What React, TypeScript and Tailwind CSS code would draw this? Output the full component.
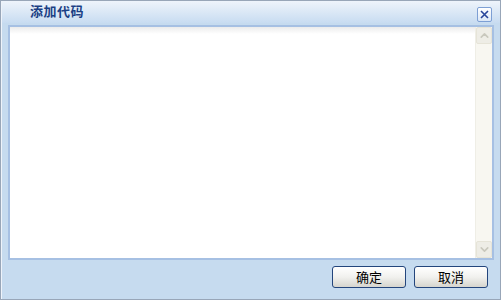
import { ChevronUp, ChevronDown } from 'lucide-react';

const font = { fontFamily: '"Liberation Sans", "Noto Sans CJK SC", sans-serif' };

const DialogButton = ({ label }: { label: string }) => (
  <button className="w-[74px] h-[22px] rounded-[3px] border border-[#23457c] bg-gradient-to-b from-[#ffffff] via-[#f1f1ee] to-[#d6d5ce] text-[13px] leading-none text-black">
    {label}
  </button>
);

const App = () => {
  return (
    <div className="w-[503px] h-[301px] bg-white" style={font}>
      <div className="w-[501px] h-[300px] flex flex-col border border-[#98a6b8] bg-[#c6dbef]">
        {/* Title bar */}
        <div className="h-[22px] flex items-center justify-between pl-[28px] pr-[8px] border-l border-[#eef3fa] bg-gradient-to-b from-[#eef4fb] to-[#c8dcf1]">
          <span className="text-[13px] font-bold text-[#1b3f84] tracking-[0.5px]">添加代码</span>
          <div className="mt-[4px] w-[15px] h-[15px] flex items-center justify-center rounded-[2px] border border-[#7d9fd4] bg-gradient-to-b from-white to-[#dbe7f6]">
            <svg width="9" height="9" viewBox="0 0 9 9">
              <path d="M1 1 L8 8 M8 1 L1 8" stroke="#27459a" strokeWidth="1.6" />
            </svg>
          </div>
        </div>

        {/* Body */}
        <div className="flex-1 flex flex-col px-[6px] pt-[2px] border-l border-[#eef3fa]">
          <div className="h-[235px] flex border-2 border-[#a6c0e3] bg-white">
            <div className="flex-1 bg-gradient-to-b from-[#ececec] via-white to-white [background-size:100%_14px] bg-no-repeat" />
            <div className="w-[17px] flex flex-col bg-[#f8f7f1] border-l border-[#efeee6]">
              <div className="h-[17px] flex items-center justify-center rounded-[2px] border border-[#e6e4d8] bg-[#eeede6]">
                <ChevronUp size={13} strokeWidth={3} className="text-[#c9c8bd]" />
              </div>
              <div className="flex-1" />
              <div className="h-[17px] flex items-center justify-center rounded-[2px] border border-[#e6e4d8] bg-[#eeede6]">
                <ChevronDown size={13} strokeWidth={3} className="text-[#c9c8bd]" />
              </div>
            </div>
          </div>

          <div className="flex justify-end gap-[8px] pt-[6px] pr-[6px]">
            <DialogButton label="确定" />
            <DialogButton label="取消" />
          </div>
        </div>
      </div>
    </div>
  );
};

export default App;
